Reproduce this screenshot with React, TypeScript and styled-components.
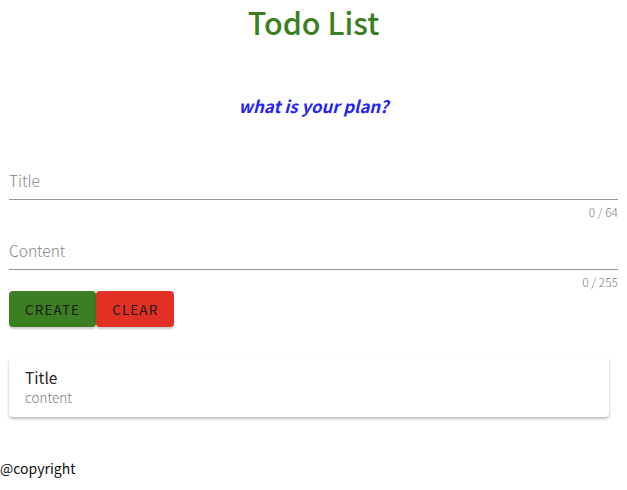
import React from "react";
import styled, { createGlobalStyle } from "styled-components";

const GlobalStyle = createGlobalStyle`
  body {
    margin: 0;
    background: #fff;
    font-family: "Noto Sans CJK KR", "Noto Sans", sans-serif;
  }
`;

function Field({ label, max }: { label: string; max: number }) {
  return (
    <FieldWrap>
      <FieldLabel>{label}</FieldLabel>
      <Underline />
      <Helper>0 / {max}</Helper>
    </FieldWrap>
  );
}

export default function App() {
  return (
    <>
      <GlobalStyle />
      <Page>
        <Heading>Todo List</Heading>
        <Subtitle>what is your plan?</Subtitle>
        <Form>
          <Field label="Title" max={64} />
          <Field label="Content" max={255} />
          <Buttons>
            <ActionButton $bg="#3c7e22">Create</ActionButton>
            <ActionButton $bg="#e03124">Clear</ActionButton>
          </Buttons>
        </Form>
        <Card>
          <CardTitle>Title</CardTitle>
          <CardText>content</CardText>
        </Card>
      </Page>
      <Footer>@copyright</Footer>
    </>
  );
}

const Page = styled.div`
  padding: 0 9px;
`;

const Heading = styled.h1`
  margin: 0;
  text-align: center;
  color: #3c7e22;
  font-size: 30.5px;
  font-weight: 500;
  line-height: 44px;
`;

const Subtitle = styled.h3`
  margin: 49px 0 0;
  text-align: center;
  color: #2424f0;
  font-size: 16.8px;
  font-style: italic;
  font-weight: 700;
  line-height: 26px;
`;

const Form = styled.div`
  margin-top: 49px;
  display: flex;
  flex-direction: column;
`;

const FieldWrap = styled.div`
  display: flex;
  flex-direction: column;
  margin-bottom: 2px;
`;

const FieldLabel = styled.div`
  color: #858585;
  font-size: 15.5px;
  font-weight: 300;
  line-height: 24px;
  padding-bottom: 7px;
`;

const Underline = styled.div`
  height: 1px;
  background: #949494;
`;

const Helper = styled.div`
  text-align: right;
  color: #808080;
  font-size: 12px;
  font-weight: 300;
  line-height: 16px;
  padding-top: 4px;
  margin-bottom: 16px;
`;

const Buttons = styled.div`
  display: flex;
  margin-top: -17px;
`;

const ActionButton = styled.button<{ $bg: string }>`
  height: 36px;
  padding: 0 16px;
  border: none;
  border-radius: 4px;
  background: ${(p) => p.$bg};
  color: #1a1a1a;
  font-family: "Noto Sans CJK KR", "Noto Sans", sans-serif;
  font-size: 13.5px;
  font-weight: 400;
  letter-spacing: 1.1px;
  text-transform: uppercase;
  box-shadow: 0 2px 2px rgba(0, 0, 0, 0.2);
`;

const Card = styled.div`
  margin-top: 30px;
  width: 600px;
  box-sizing: border-box;
  padding: 8px 16px 12px;
  background: #fff;
  border-radius: 4px;
  box-shadow: 0 2px 3px rgba(0, 0, 0, 0.25), 0 0 2px rgba(0, 0, 0, 0.06);
`;

const CardTitle = styled.div`
  color: #222;
  font-size: 15.5px;
  line-height: 24px;
`;

const CardText = styled.div`
  color: #808080;
  font-size: 13.5px;
  font-weight: 300;
  line-height: 16px;
`;

const Footer = styled.div`
  margin-top: 41px;
  color: #111;
  font-size: 14px;
  line-height: 20px;
`;
